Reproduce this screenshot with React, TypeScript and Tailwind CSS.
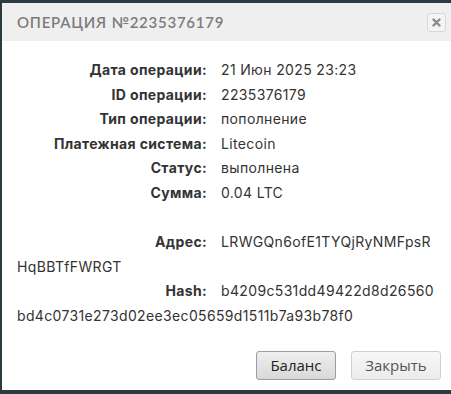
const rows: [string, string][] = [
  ["Дата операции:", "21 Июн 2025 23:23"],
  ["ID операции:", "2235376179"],
  ["Тип операции:", "пополнение"],
  ["Платежная система:", "Litecoin"],
  ["Статус:", "выполнена"],
  ["Сумма:", "0.04 LTC"],
];

// long values wrap onto a second line the same way as the original
const long: [string, string, string][] = [
  ["Адрес:", "LRWGQn6ofE1TYQjRyNMFpsR", "HqBBTfFWRGT"],
  ["Hash:", "b4209c531dd49422d8d26560", "bd4c0731e273d02ee3ec05659d1511b7a93b78f0"],
];

function Line({ label, value }: { label: string; value: string }) {
  return (
    <div className="h-[24.6px] leading-[24.6px] whitespace-nowrap">
      <span className="inline-block w-[190px] text-right font-bold mr-[14px]">{label}</span>
      {value}
    </div>
  );
}

export default function App() {
  return (
    <div className="w-[451px] h-[394px] bg-[#2e3a42] pt-[3px] pl-[2px] pb-[4px] overflow-hidden">
      <div className="h-full bg-white flex flex-col font-['Inter','Liberation_Sans',sans-serif] text-[#333]">
        <div className="h-[38px] bg-[#efefef] flex items-center justify-between pl-[15px] pr-[5px] shrink-0">
          <h1 className="text-[15px] font-semibold tracking-[0.05em] text-[#7c7c7c] font-['Lato','Liberation_Sans',sans-serif]">
            ОПЕРАЦИЯ №2235376179
          </h1>
          <button className="w-[19px] h-[19px] rounded-[3px] border border-[#d6d6d6] bg-[#f4f4f4] flex items-center justify-center">
            <svg width="9" height="9" viewBox="0 0 9 9">
              <path d="M1.5 1.5 L7.5 7.5 M7.5 1.5 L1.5 7.5" stroke="#8a8a8a" strokeWidth="2.4" strokeLinecap="round" />
            </svg>
          </button>
        </div>

        <div className="flex-1 pt-[17px] pl-[15px] text-[14px] tracking-[0.025em]">
          {rows.map(([l, v]) => (
            <Line key={l} label={l} value={v} />
          ))}
          <div className="h-[24.6px]" />
          {long.map(([l, a, b]) => (
            <div key={l}>
              <Line label={l} value={a} />
              <div className="h-[24.6px] leading-[24.6px] whitespace-nowrap">{b}</div>
            </div>
          ))}
        </div>

        <div className="flex justify-end gap-[15px] pr-[10px] pb-[10px] font-['Open_Sans','Liberation_Sans',sans-serif] text-[15px]">
          <button className="w-[80px] h-[29px] rounded-[3px] border border-[#9d9d9d] bg-gradient-to-b from-[#efefef] to-[#d9d9d9] text-[#222]">
            Баланс
          </button>
          <button className="w-[90px] h-[29px] rounded-[3px] border border-[#d0d0d0] bg-gradient-to-b from-[#f7f7f7] to-[#ececec] text-[#555]">
            Закрыть
          </button>
        </div>
      </div>
    </div>
  );
}
